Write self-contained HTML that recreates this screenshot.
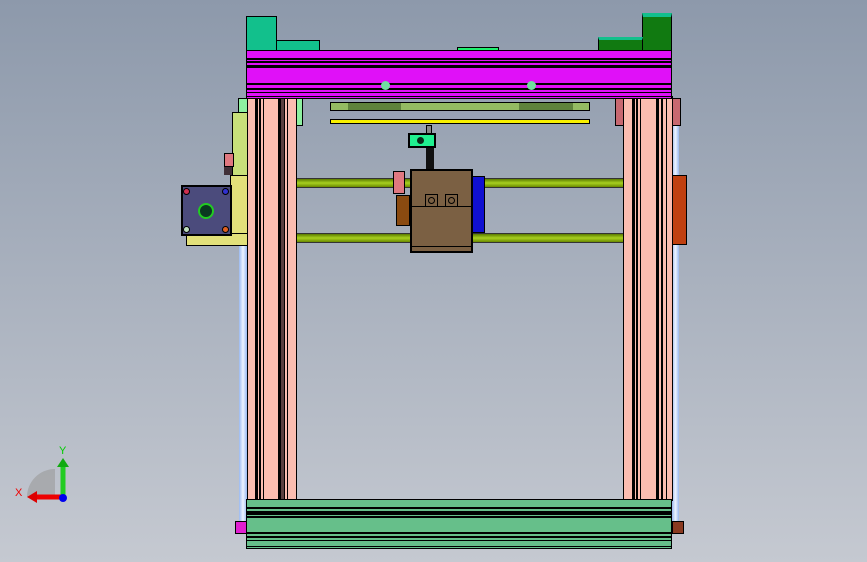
<!DOCTYPE html>
<html><head><style>
body{margin:0;width:867px;height:562px;overflow:hidden;background:linear-gradient(#8d99ab,#c5c9d1);position:relative;font-family:"Liberation Sans",sans-serif}
div{position:absolute;box-sizing:border-box}
.b{border:1px solid #000}
</style></head><body>
<div style="left:239px;top:240px;width:8px;height:282px;background:linear-gradient(90deg,#9ab8f0,#eef4ff,#9ab8f0)"></div>
<div style="left:672px;top:125px;width:7px;height:397px;background:linear-gradient(90deg,#9ab8f0,#eef4ff,#9ab8f0)"></div>
<div style="left:296px;top:178px;width:328px;height:10px;background:linear-gradient(#5a7a00,#a8d020,#6a8a00);border-top:1px solid #333;border-bottom:1px solid #333"></div>
<div style="left:296px;top:233px;width:328px;height:10px;background:linear-gradient(#5a7a00,#a8d020,#6a8a00);border-top:1px solid #333;border-bottom:1px solid #333"></div>
<div class="b" style="left:247px;top:96px;width:50px;height:405px;background:linear-gradient(90deg,#fbbdb0 0 7px,#000 7px 10px,#fbbdb0 10px 11px,#000 11px 13px,#fbbdb0 13px 15px,#000 15px 16px,#fbbdb0 16px 30px,#000 30px 33px,#5a4040 33px 36px,#000 36px 37px,#fbbdb0 37px 39px,#000 39px 40px,#fbbdb0 40px)"></div>
<div class="b" style="left:623px;top:96px;width:50px;height:405px;background:linear-gradient(90deg,#fbbdb0 0 8px,#000 8px 11px,#fbbdb0 11px 12px,#000 12px 14px,#fbbdb0 14px 16px,#000 16px 17px,#fbbdb0 17px 32px,#000 32px 35px,#fbbdb0 35px 37px,#000 37px 39px,#fbbdb0 39px 42px,#000 42px 43px,#fbbdb0 43px)"></div>
<div class="b" style="left:238px;top:98px;width:10px;height:28px;background:#8ef0a0"></div>
<div class="b" style="left:296px;top:98px;width:7px;height:28px;background:#8ef0a0"></div>
<div class="b" style="left:615px;top:98px;width:9px;height:28px;background:#c86870"></div>
<div class="b" style="left:672px;top:98px;width:9px;height:28px;background:#c86870"></div>
<div class="b" style="left:232px;top:112px;width:16px;height:65px;background:#c8e07a"></div>
<div class="b" style="left:224px;top:153px;width:10px;height:14px;background:#e07880"></div>
<div style="left:224px;top:167px;width:8px;height:8px;background:#403038"></div>
<div class="b" style="left:230px;top:175px;width:18px;height:70px;background:#e2e07a"></div>
<div class="b" style="left:186px;top:233px;width:62px;height:13px;background:#e2e07a"></div>
<div class="b" style="left:181px;top:185px;width:51px;height:51px;background:#4b4b7c;border-width:2px"></div>
<div style="left:198px;top:203px;width:16px;height:16px;border-radius:50%;background:#0a3a20;border:2px solid #2c2"></div>
<div style="left:183px;top:188px;width:7px;height:7px;border-radius:50%;background:#d03050;border:1px solid #000"></div>
<div style="left:222px;top:188px;width:7px;height:7px;border-radius:50%;background:#3030d0;border:1px solid #000"></div>
<div style="left:183px;top:226px;width:7px;height:7px;border-radius:50%;background:#c0e0c0;border:1px solid #000"></div>
<div style="left:222px;top:226px;width:7px;height:7px;border-radius:50%;background:#e06020;border:1px solid #000"></div>
<div class="b" style="left:672px;top:175px;width:15px;height:70px;background:#c04010"></div>
<div class="b" style="left:330px;top:102px;width:260px;height:9px;background:linear-gradient(90deg,#94bb62 0 17px,#5f833c 17px 70px,#94bb62 70px 188px,#5f833c 188px 242px,#94bb62 242px)"></div>
<div class="b" style="left:330px;top:119px;width:260px;height:5px;background:#f8f000"></div>
<div class="b" style="left:246px;top:16px;width:31px;height:36px;background:#12c08c"></div>
<div class="b" style="left:276px;top:40px;width:44px;height:12px;background:#12c08c"></div>
<div class="b" style="left:642px;top:13px;width:30px;height:39px;background:#117a11;border-top:4px solid #12c08c"></div>
<div class="b" style="left:598px;top:37px;width:45px;height:15px;background:#117a11;border-top:3px solid #12c08c"></div>
<div class="b" style="left:457px;top:47px;width:42px;height:5px;background:#20f070"></div>
<div style="left:246px;top:50px;width:426px;height:49px;border:1px solid #000;background:linear-gradient(#e010f8 0 7px,#000 7px 9px,#e010f8 9px 10px,#000 10px 12px,#e010f8 12px 14px,#000 14px 17px,#e010f8 17px 32px,#000 32px 34px,#e010f8 34px 37px,#000 37px 39px,#e010f8 39px 41px,#000 41px 42px,#e010f8 42px 45px,#000 45px 46px,#e010f8 46px)"></div>
<div style="left:381px;top:81px;width:9px;height:9px;border-radius:50%;background:#70e0a0"></div>
<div style="left:527px;top:81px;width:9px;height:9px;border-radius:50%;background:#70e0a0"></div>
<div class="b" style="left:426px;top:125px;width:6px;height:10px;background:#888"></div>
<div class="b" style="left:408px;top:133px;width:28px;height:15px;background:#20f090;border-width:2px"></div>
<div style="left:417px;top:137px;width:7px;height:7px;border-radius:50%;background:#0a2a1a"></div>
<div style="left:426px;top:148px;width:8px;height:22px;background:#111"></div>
<div class="b" style="left:396px;top:195px;width:14px;height:31px;background:#8a4a10"></div>
<div class="b" style="left:472px;top:176px;width:13px;height:57px;background:#1010d0"></div>
<div class="b" style="left:410px;top:169px;width:63px;height:84px;background:#7b6043;border-width:2px"></div>
<div style="left:410px;top:206px;width:63px;height:1px;background:#000"></div>
<div style="left:410px;top:246px;width:63px;height:1px;background:#000"></div>
<div class="b" style="left:425px;top:194px;width:13px;height:13px"></div>
<div class="b" style="left:445px;top:194px;width:13px;height:13px"></div>
<div style="left:428px;top:197px;width:7px;height:7px;border-radius:50%;border:1px solid #000"></div>
<div style="left:448px;top:197px;width:7px;height:7px;border-radius:50%;border:1px solid #000"></div>
<div class="b" style="left:393px;top:171px;width:12px;height:23px;background:#e07880"></div>
<div style="left:246px;top:499px;width:426px;height:50px;border:1px solid #000;background:linear-gradient(#66bf8a 0 7px,#000 7px 9px,#66bf8a 9px 11px,#000 11px 15px,#66bf8a 15px 16px,#000 16px 18px,#66bf8a 18px 32px,#000 32px 34px,#66bf8a 34px 36px,#000 36px 38px,#66bf8a 38px 40px,#000 40px 41px,#66bf8a 41px 46px,#000 46px 47px,#66bf8a 47px)"></div>
<div class="b" style="left:235px;top:521px;width:12px;height:13px;background:#e020d0"></div>
<div class="b" style="left:672px;top:521px;width:12px;height:13px;background:#8a3a20"></div>
<svg style="position:absolute;left:10px;top:440px" width="70" height="70">
<path d="M17 57 A28 28 0 0 1 45 29 L45 57 Z" fill="#999" opacity="0.6"/>
<line x1="53" y1="26" x2="53" y2="57" stroke="#2c2" stroke-width="5"/>
<path d="M47 27 L53 18 L59 27 Z" fill="#1a1"/>
<line x1="25" y1="57" x2="53" y2="57" stroke="#e00" stroke-width="5"/>
<path d="M27 51 L17 57 L27 63 Z" fill="#d00"/>
<circle cx="53" cy="58" r="4" fill="#00e"/>
<text x="49" y="14" font-size="11" fill="#0c0" font-family="Liberation Sans">Y</text>
<text x="5" y="56" font-size="11" fill="#e00" font-family="Liberation Sans">X</text>
</svg>
</body></html>
